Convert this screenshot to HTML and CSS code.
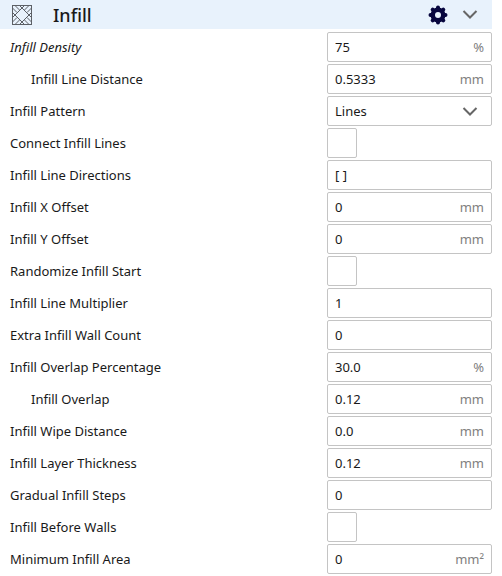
FILE: index.html
```html
<!DOCTYPE html>
<html lang="en">
<head>
<meta charset="utf-8">
<title>Infill</title>
<link rel="stylesheet" href="styles.css">
</head>
<body>
<main class="panel">
  <header class="header">
    <svg class="header-icon" viewBox="0 0 20 20" aria-hidden="true"><rect x=".5" y=".5" width="19" height="19"/><path d="M12.500.5l-12 12M7.500.5l12 12M.5 7.500l12 12M19.500 7.500l-12 12M3 .5l4.500 4.500M.5 3l4.500 4.500M17 .5l-4.500 4.500M19.500 3l-4.500 4.500M.5 17l4.500-4.500M3 19.500l4.500-4.500M19.500 17l-4.500-4.500M17 19.500l-4.500-4.500"/></svg>
    <h1 class="title">Infill</h1>
    <button class="icon-button" type="button" aria-label="Settings"><svg class="gear" viewBox="0 0 20 20"><path class="teeth" d="M10 2.500v15M2.500 10h15M4.700 4.700l10.600 10.600M15.300 4.700 4.700 15.300"/><circle class="hub" cx="10" cy="10" r="7.500"/><circle class="hole" cx="10" cy="10" r="3"/></svg></button>
    <button class="icon-button" type="button" aria-label="Collapse"><svg class="chevron" viewBox="0 0 16 9"><path d="M1.500 1l6.500 6.500L14.500 1"/></svg></button>
  </header>
  <form class="settings">
    <div class="row"><label class="changed" for="density">Infill Density</label><div class="field"><input id="density" value="75"><span class="unit">%</span></div></div>
    <div class="row"><label class="child" for="distance">Infill Line Distance</label><div class="field"><input id="distance" value="0.5333"><span class="unit">mm</span></div></div>
    <div class="row"><label for="pattern">Infill Pattern</label><div class="field"><select id="pattern"><option>Lines</option></select><svg class="chevron" viewBox="0 0 16 9" aria-hidden="true"><path d="M1.500 1l6.500 6.500L14.500 1"/></svg></div></div>
    <div class="row"><label for="connect">Connect Infill Lines</label><input class="check" id="connect" type="checkbox"></div>
    <div class="row"><label for="directions">Infill Line Directions</label><div class="field"><input id="directions" value="[ ]"></div></div>
    <div class="row"><label for="xoff">Infill X Offset</label><div class="field"><input id="xoff" value="0"><span class="unit">mm</span></div></div>
    <div class="row"><label for="yoff">Infill Y Offset</label><div class="field"><input id="yoff" value="0"><span class="unit">mm</span></div></div>
    <div class="row"><label for="random">Randomize Infill Start</label><input class="check" id="random" type="checkbox"></div>
    <div class="row"><label for="multiplier">Infill Line Multiplier</label><div class="field"><input id="multiplier" value="1"></div></div>
    <div class="row"><label for="walls">Extra Infill Wall Count</label><div class="field"><input id="walls" value="0"></div></div>
    <div class="row"><label for="overlap-pct">Infill Overlap Percentage</label><div class="field"><input id="overlap-pct" value="30.0"><span class="unit">%</span></div></div>
    <div class="row"><label class="child" for="overlap">Infill Overlap</label><div class="field"><input id="overlap" value="0.12"><span class="unit">mm</span></div></div>
    <div class="row"><label for="wipe">Infill Wipe Distance</label><div class="field"><input id="wipe" value="0.0"><span class="unit">mm</span></div></div>
    <div class="row"><label for="thickness">Infill Layer Thickness</label><div class="field"><input id="thickness" value="0.12"><span class="unit">mm</span></div></div>
    <div class="row"><label for="gradual">Gradual Infill Steps</label><div class="field"><input id="gradual" value="0"></div></div>
    <div class="row"><label for="before">Infill Before Walls</label><input class="check" id="before" type="checkbox"></div>
    <div class="row"><label for="area">Minimum Infill Area</label><div class="field"><input id="area" value="0"><span class="unit">mm²</span></div></div>
  </form>
</main>
</body>
</html>
```
FILE: styles.css
```css
* { box-sizing: border-box; }
body {
  margin: 0;
  background: #fff;
  color: #191919;
  font: 13px/18px "Noto Sans", sans-serif;
}
.panel { margin-right: 10px; }
.header {
  display: flex;
  align-items: center;
  height: 29px;
  padding: 0 14px 0 12px;
  background: #e8f2fc;
}
.header-icon {
  width: 20px;
  height: 20px;
  fill: none;
  stroke: #5c6066;
}
.title {
  flex: 1;
  margin: 0 0 0 21px;
  font-size: 18px;
  line-height: 28px;
  font-weight: 500;
}
.icon-button {
  display: flex;
  margin-left: 14px;
  padding: 0;
  border: 0;
  background: none;
}
.gear {
  width: 20px;
  height: 20px;
}
.teeth {
  stroke: #08073f;
  stroke-width: 4;
  stroke-linecap: round;
}
.hub { fill: #08073f; }
.hole { fill: #e8f2fc; }
.chevron {
  width: 16px;
  height: 9px;
  fill: none;
  stroke: #666;
  stroke-width: 2;
}
.settings {
  display: grid;
  gap: 2px;
  padding: 3px 0 2px;
}
.row {
  display: grid;
  grid-template-columns: 1fr 165px;
  align-items: center;
  min-height: 30px;
}
label { padding-left: 10px; }
.child { padding-left: 31px; }
.changed { font-style: italic; }
.field {
  display: flex;
  align-items: center;
  height: 30px;
  padding: 0 7px;
  border: 1px solid #c4c4c4;
  border-radius: 2px;
}
.field input, .field select {
  flex: 1;
  min-width: 0;
  padding: 0;
  border: 0;
  outline: 0;
  appearance: none;
  background: none;
  color: inherit;
  font: inherit;
}
.field .chevron { margin-right: 6px; }
.unit { color: #808080; }
.check {
  width: 30px;
  height: 30px;
  margin: 0;
  appearance: none;
  border: 1px solid #c4c4c4;
  border-radius: 2px;
}
```
